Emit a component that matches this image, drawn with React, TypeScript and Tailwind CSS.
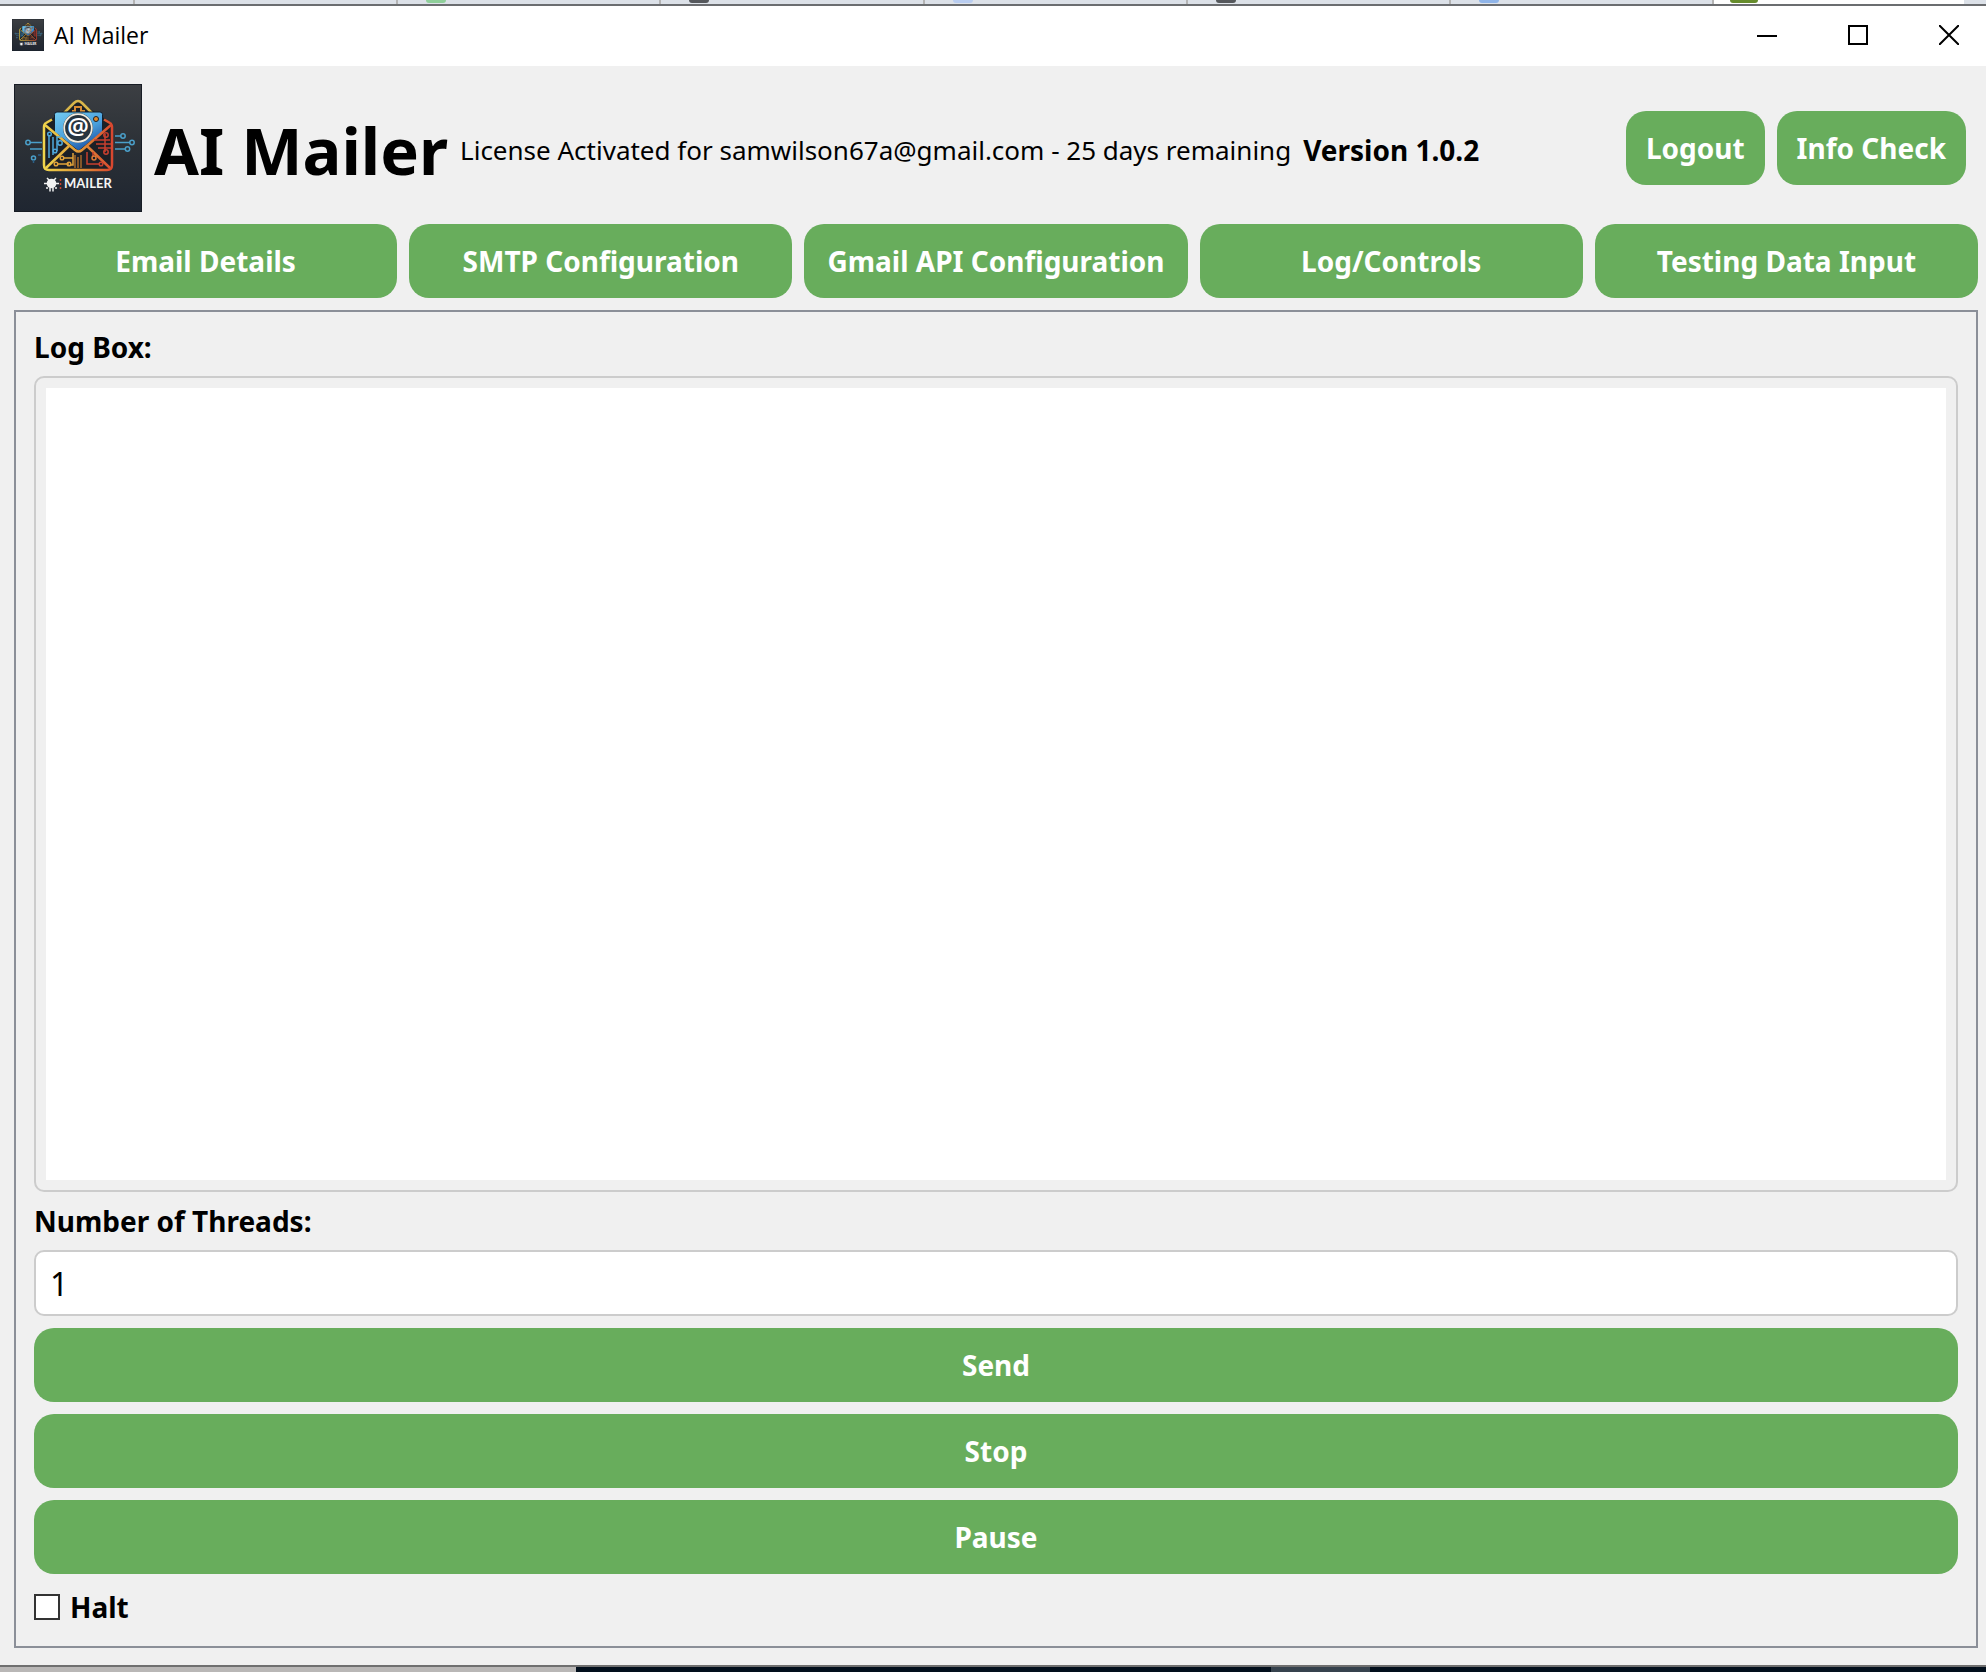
import clsx from 'clsx';
import type { ButtonHTMLAttributes, JSX } from 'react';
import { useId, useState } from 'react';

const tabs = [
  'Email Details',
  'SMTP Configuration',
  'Gmail API Configuration',
  'Log/Controls',
  'Testing Data Input',
];

const browserTabs = [
  { className: 'bg-transparent', id: 'mail' },
  { className: 'bg-[#8fcf9a]', id: 'review' },
  { className: 'bg-[#55585c]', id: 'code' },
  { className: 'bg-[#b9cdf0]', id: 'docs' },
  { className: 'bg-[#55585c]', id: 'repo' },
  { className: 'bg-[#8fb4e8]', id: 'drive' },
];

type LogoProperties = {
  className?: string;
};

function Logo({ className }: LogoProperties): JSX.Element {
  const id = useId();

  return (
    <svg aria-hidden="true" className={className} viewBox="0 0 128 128">
      <defs>
        <linearGradient id={`${id}-back`} x1="0" x2="0" y1="0" y2="1">
          <stop offset="0" stopColor="#3c3f43" />
          <stop offset="0.5" stopColor="#2b3036" />
          <stop offset="1" stopColor="#1f2631" />
        </linearGradient>
        <linearGradient
          gradientUnits="userSpaceOnUse"
          id={`${id}-edge`}
          x1="29"
          x2="99"
          y1="0"
          y2="0"
        >
          <stop offset="0" stopColor="#f0d64c" />
          <stop offset="0.5" stopColor="#e09a38" />
          <stop offset="1" stopColor="#d8452f" />
        </linearGradient>
        <linearGradient id={`${id}-card`} x1="0" x2="0.6" y1="0" y2="1">
          <stop offset="0" stopColor="#74ccf2" />
          <stop offset="0.6" stopColor="#4aa0dc" />
          <stop offset="1" stopColor="#1c52a4" />
        </linearGradient>
      </defs>
      <rect fill={`url(#${id}-back)`} height="128" width="128" />
      <rect
        fill="none"
        height="127"
        stroke="#171c24"
        width="127"
        x="0.5"
        y="0.5"
      />

      <path d="M30 40 64 17 99 40V82q0 4-4 4H34q-4 0-4-4Z" fill="#1c2026" />
      <path
        d="M50 29 60 19q4-4 8 0L78 29"
        fill="none"
        stroke="#d9b64a"
        strokeWidth="2.5"
      />
      <path d="M58 27h3v-4h6v4h4" fill="none" stroke="#d98c34" strokeWidth="2" />
      <path
        d="M43 28H86q2.500 0 2.500 2.500V48L64.500 67 40.500 48V30.500Q40.500 28 43 28Z"
        fill={`url(#${id}-card)`}
        stroke="#12202f"
      />
      <circle cx="82" cy="35" fill="#e08a2c" r="2.500" stroke="#1c2026" />

      <g fill="none" stroke={`url(#${id}-edge)`} strokeWidth="2.500">
        <path d="M38 35.500 32 39q-2 1-2 4V81q0 5 5 5H93q5 0 5-5V43q0-3-2-4L90 35.500" />
        <path d="M31 41 61 66q3.500 3 7 0L97 41" />
        <path d="M32 84 55 62M96 84 73 62" />
      </g>

      <g fill="none" stroke="#4fa9dd" strokeWidth="1.500">
        <path d="M35 51V74M39 53V71M47 53h-4v14" />
        <circle cx="35.500" cy="50" r="1.800" />
        <circle cx="46" cy="59" r="2.200" />
        <circle cx="41" cy="67" r="1.800" />
      </g>

      <g fill="none" stroke="#e0a23a" strokeWidth="1.500">
        <path d="M43 80H55M50 74h9v-5M59 74v7h-3" />
        <circle cx="42" cy="80" r="1.800" />
        <circle cx="55" cy="80" r="1.800" />
        <circle cx="48" cy="74" r="1.800" />
        <path d="M61 71V84M64 73V84M67 71V84" stroke="#a5682b" />
      </g>

      <g fill="none" stroke="#c73f2f" strokeWidth="1.500">
        <path d="M73 68V80H85M79 73V68M80 56H96M82 60H97M84 64H97M91 50V68" />
        <circle cx="87" cy="80" r="1.800" />
        <circle cx="80" cy="74" r="2" stroke="#df7a36" />
        <circle cx="92" cy="51" r="2.200" />
        <circle cx="92" cy="68" r="2.200" />
      </g>

      <g fill="none" stroke="#4a9fc9" strokeWidth="1.500">
        <path d="M16 58.500H28M16 65H28M101 52H107M101 58.500H116M101 65H111" />
        <circle cx="14" cy="58.500" r="2.200" />
        <circle cx="19.500" cy="74" r="2" />
        <path d="M19.500 76v3M24 71h3" stroke="#2b5f86" />
        <circle cx="109" cy="52" r="2.200" />
        <circle cx="118" cy="58.500" r="2.200" />
        <circle cx="113.500" cy="65" r="2.200" />
      </g>

      <circle cx="64" cy="44" fill="#26343f" r="15" />
      <circle
        cx="64"
        cy="44"
        fill="none"
        r="13.800"
        stroke="#f1ece0"
        strokeWidth="1.800"
      />
      <text
        className="font-['Noto_Sans',sans-serif] text-[24px] font-semibold"
        fill="#ffffff"
        textAnchor="middle"
        x="64"
        y="51"
      >
        @
      </text>

      <g fill="#f2f2f2">
        <circle cx="37.500" cy="99.500" r="4.800" />
        <path
          d="M33 94l2 2M42 94l-2 2M30 99.500h15M33 103v2M36 104v3.500M39 104v3.500M42 103v2"
          stroke="#f2f2f2"
          strokeWidth="1.500"
        />
      </g>
      <path
        d="M46.500 95v2M46.500 99v2M46.500 103v2"
        stroke="#c8402f"
        strokeWidth="1.500"
      />
      <text
        className="font-[Lato,sans-serif] text-[13px] font-bold"
        fill="#f5f5f5"
        x="50"
        y="104"
      >
        MAILER
      </text>
    </svg>
  );
}

function Button({
  className,
  ...properties
}: ButtonHTMLAttributes<HTMLButtonElement>): JSX.Element {
  return (
    <button
      className={clsx(
        'h-[74px] rounded-[20px] bg-[#68ad5c] text-[28px] leading-[34px] font-bold whitespace-nowrap text-white',
        className,
      )}
      type="button"
      {...properties}
    />
  );
}

function BrowserStrip(): JSX.Element {
  return (
    <div className="flex h-1 shrink-0 overflow-hidden bg-[#dce1e8]">
      <div className="w-[135px] border-r-2 border-[#b4b4b4]" />
      {browserTabs.map(tab => {
        return (
          <div
            className="flex flex-1 border-r-2 border-[#b4b4b4] pl-7"
            key={tab.id}
          >
            <div className={clsx('h-[3px] w-5 rounded-b-full', tab.className)} />
          </div>
        );
      })}
      <div className="mr-[22px] w-[250px] bg-white pl-4">
        <div className="h-[3px] w-7 rounded-b-full bg-[#668c2c]" />
      </div>
    </div>
  );
}

function TitleBar(): JSX.Element {
  return (
    <div className="flex h-[62px] shrink-0 items-center border-t-2 border-[#6b6d70] bg-white pb-[3px] pl-3">
      <Logo className="size-8" />
      <span className="ml-[10px] flex-1 font-['Open_Sans',sans-serif] text-[23px] leading-[32px]">
        AI Mailer
      </span>
      <div className="flex gap-[17px]">
        <button
          aria-label="Minimize"
          className="flex h-14 w-[74px] items-center justify-center"
          type="button"
        >
          <svg className="size-5" fill="none" stroke="#000" strokeWidth="2">
            <path d="M0 11H20" />
          </svg>
        </button>
        <button
          aria-label="Maximize"
          className="flex h-14 w-[74px] items-center justify-center"
          type="button"
        >
          <svg className="size-5" fill="none" stroke="#000" strokeWidth="2">
            <path d="M1 1H19V19H1Z" />
          </svg>
        </button>
        <button
          aria-label="Close"
          className="flex h-14 w-[74px] items-center justify-center"
          type="button"
        >
          <svg className="size-5" fill="none" stroke="#000" strokeWidth="2">
            <path d="M0 0 20 20M20 0 0 20" />
          </svg>
        </button>
      </div>
    </div>
  );
}

export default function App(): JSX.Element {
  const [log, setLog] = useState('');
  const [threads, setThreads] = useState('1');
  const [isHalted, setIsHalted] = useState(false);

  return (
    <div className="flex h-screen min-h-[900px] flex-col bg-[#f0f0f0] font-['Noto_Sans',sans-serif] text-[28px] leading-[34px] text-black">
      <BrowserStrip />
      <TitleBar />

      <main className="flex flex-1 flex-col gap-3 pt-[18px] pr-2 pb-[17px] pl-[14px]">
        <header className="flex items-center gap-3 pr-3">
          <Logo className="size-32 shrink-0" />
          <div className="flex flex-1 items-center gap-3 pt-1 whitespace-nowrap">
            <h1 className="text-[65px] leading-[78px] font-bold">AI Mailer</h1>
            <p className="text-[26px]">
              License Activated for samwilson67a@gmail.com - 25 days remaining
            </p>
            <p className="font-bold">Version 1.0.2</p>
          </div>
          <Button className="px-5">Logout</Button>
          <Button className="px-5">Info Check</Button>
        </header>

        <nav className="grid grid-cols-5 gap-3">
          {tabs.map(tab => {
            return <Button key={tab}>{tab}</Button>;
          })}
        </nav>

        <section className="flex flex-1 flex-col gap-3 border-2 border-[#8b8f98] p-[18px]">
          <label className="font-bold" htmlFor="log">
            Log Box:
          </label>
          <div className="flex flex-1 rounded-[10px] border-2 border-[#cccccc] p-[10px]">
            <textarea
              readOnly
              className="flex-1 resize-none bg-white outline-none"
              id="log"
              value={log}
              onChange={event => {
                setLog(event.target.value);
              }}
            />
          </div>
          <label className="font-bold" htmlFor="threads">
            Number of Threads:
          </label>
          <input
            className="h-[66px] rounded-[10px] border-2 border-[#cccccc] bg-white px-[14px] text-[32px] outline-none"
            id="threads"
            type="text"
            value={threads}
            onChange={event => {
              setThreads(event.target.value);
            }}
          />
          <Button>Send</Button>
          <Button>Stop</Button>
          <Button>Pause</Button>
          <label className="flex h-[42px] items-center gap-[10px] font-bold">
            <input
              checked={isHalted}
              className="size-[26px] appearance-none border-2 border-[#333333] bg-white checked:bg-[#333333]"
              type="checkbox"
              onChange={() => {
                setIsHalted(!isHalted);
              }}
            />
            Halt
          </label>
        </section>
      </main>

      <footer className="flex h-[7px] shrink-0 border-t-2 border-[#6f6f6f] bg-[#020f1c]">
        <div className="w-[29%] bg-[#b9b7b6]" />
        <div className="ml-[35%] w-[5%] bg-[#36424d]" />
      </footer>
    </div>
  );
}
